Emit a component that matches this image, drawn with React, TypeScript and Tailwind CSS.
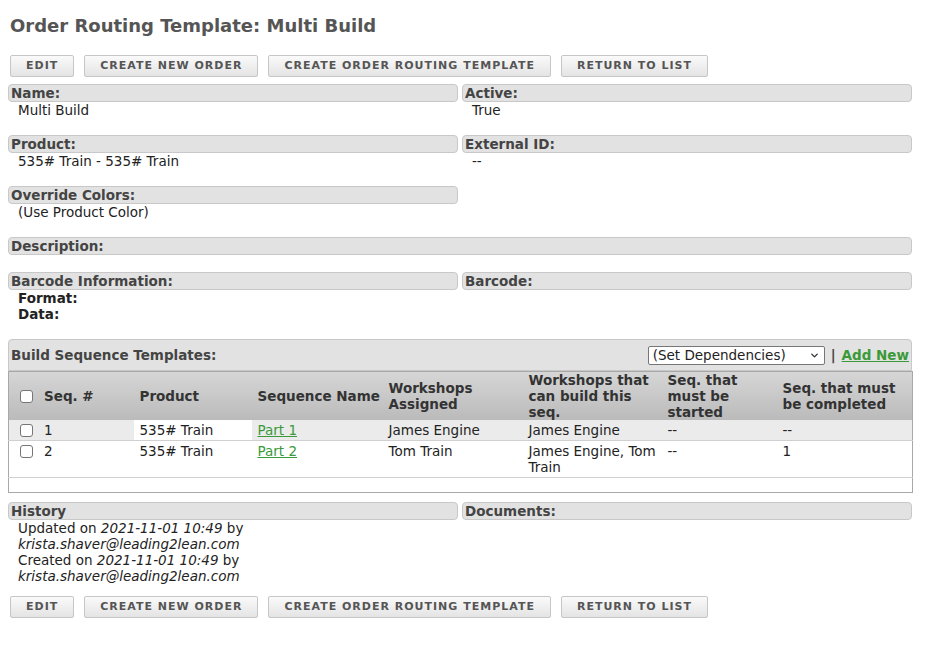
import { ChevronDown } from "lucide-react";

const buttons = ["Edit", "Create New Order", "Create Order Routing Template", "Return to List"];

function ButtonRow() {
  return (
    <div className="flex gap-[10px] pl-[2px]">
      {buttons.map((b) => (
        <button
          key={b}
          className="h-[22px] px-[15px] border border-[#c6c6c6] rounded-[2px] bg-gradient-to-b from-[#fafafa] to-[#e4e4e4] text-[11px] font-bold uppercase tracking-[1px] text-[#555]"
        >
          {b}
        </button>
      ))}
    </div>
  );
}

function Bar({ label, className = "" }: { label: string; className?: string }) {
  return (
    <div
      className={`h-[18px] leading-[16px] px-[2px] border border-[#c8c8c8] rounded-[4px] bg-[#e2e2e2] text-[13.5px] font-bold text-[#444] ${className}`}
    >
      {label}
    </div>
  );
}

function Field({ label, children }: { label: string; children?: React.ReactNode }) {
  return (
    <div className="mb-[17px]">
      <Bar label={label} />
      {children && <div className="pl-[10px] text-[13.5px] leading-[16px] text-[#222]">{children}</div>}
    </div>
  );
}

const rows = [
  { seq: "1", product: "535# Train", name: "Part 1", assigned: "James Engine", can: "James Engine", started: "--", completed: "--" },
  { seq: "2", product: "535# Train", name: "Part 2", assigned: "Tom Train", can: "James Engine, Tom Train", started: "--", completed: "1" },
];

function Check() {
  return <span className="inline-block w-[13px] h-[13px] border border-[#767676] rounded-[3px] bg-white align-middle" />;
}

function SequenceTable() {
  return (
    <div className="mb-[9px]">
      <div className="h-[32px] flex items-center justify-between px-[2px] border border-[#c8c8c8] rounded-t-[4px] bg-[#e2e2e2]">
        <span className="text-[13.5px] font-bold text-[#444]">Build Sequence Templates:</span>
        <div className="flex items-center text-[13.5px]">
          <div className="w-[177px] h-[19px] flex items-center justify-between pl-[4px] pr-[4px] border border-[#767676] rounded-[2px] bg-white text-[#222]">
            <span>(Set Dependencies)</span>
            <ChevronDown className="w-[11px] h-[11px] text-[#333]" strokeWidth={3} />
          </div>
          <span className="mx-[6px] font-bold text-[#444]">|</span>
          <a className="font-bold text-[#3a9a3a] underline">Add New</a>
        </div>
      </div>
      <table className="w-full table-fixed border-collapse border border-[#a8a8a8] text-[13.5px] text-[#222]">
        <colgroup>
          <col className="w-[125px]" />
          <col className="w-[118px]" />
          <col className="w-[131px]" />
          <col className="w-[140px]" />
          <col className="w-[139px]" />
          <col className="w-[115px]" />
          <col className="w-[136px]" />
        </colgroup>
        <thead>
          <tr className="h-[48px] bg-gradient-to-b from-[#d6d6d6] to-[#bababa] text-left font-bold text-[#333] leading-[16px]">
            <th className="pl-[11px] align-middle">
              <span className="flex items-center gap-[11px]">
                <Check />
                Seq. #
              </span>
            </th>
            <th className="pl-[6px]">Product</th>
            <th className="pl-[6px]">Sequence Name</th>
            <th className="pl-[6px]">Workshops Assigned</th>
            <th className="pl-[6px] pr-[4px]">Workshops that can build this seq.</th>
            <th className="pl-[6px] pr-[10px]">Seq. that must be started</th>
            <th className="pl-[6px]">Seq. that must be completed</th>
          </tr>
        </thead>
        <tbody className="leading-[16px]">
          {rows.map((r, i) => (
            <tr key={r.seq} className={`border-b border-[#d0d0d0] align-top ${i === 0 ? "bg-[#ebebeb]" : "bg-white"}`}>
              <td className="pl-[11px] py-[2px]">
                <span className="flex items-center gap-[11px]">
                  <Check />
                  {r.seq}
                </span>
              </td>
              <td className={`pl-[6px] py-[2px] ${i === 0 ? "bg-white" : ""}`}>{r.product}</td>
              <td className="pl-[6px] py-[2px]">
                <a className="text-[#3a9a3a] underline">{r.name}</a>
              </td>
              <td className="pl-[6px] py-[2px]">{r.assigned}</td>
              <td className="pl-[6px] pr-[4px] py-[2px]">{r.can}</td>
              <td className="pl-[6px] py-[2px]">{r.started}</td>
              <td className="pl-[6px] py-[2px]">{r.completed}</td>
            </tr>
          ))}
          <tr className="h-[15px]">
            <td colSpan={7}></td>
          </tr>
        </tbody>
      </table>
    </div>
  );
}

export default function App() {
  return (
    <div className="min-h-screen bg-white pl-[8px] w-[912px]" style={{ fontFamily: '"DejaVu Sans", Verdana, sans-serif' }}>
      <h1 className="pt-[14px] pl-[2px] text-[18px] leading-[24px] font-bold text-[#555] mb-[17px]">
        Order Routing Template: Multi Build
      </h1>
      <div className="mb-[7px]">
        <ButtonRow />
      </div>

      <div className="grid grid-cols-2 gap-x-[4px]">
        <Field label="Name:">Multi Build</Field>
        <Field label="Active:">True</Field>
        <Field label="Product:">535# Train - 535# Train</Field>
        <Field label="External ID:">--</Field>
        <Field label="Override Colors:">(Use Product Color)</Field>
        <div />
      </div>

      <Field label="Description:" />

      <div className="grid grid-cols-2 gap-x-[4px]">
        <Field label="Barcode Information:">
          <div className="font-bold">Format:</div>
          <div className="font-bold">Data:</div>
        </Field>
        <Field label="Barcode:" />
      </div>

      <SequenceTable />

      <div className="grid grid-cols-2 gap-x-[4px] mb-[12px]">
        <div>
          <Bar label="History" />
          <div className="pl-[10px] text-[13.5px] leading-[16px] text-[#222]">
            <div>
              Updated on <i>2021-11-01 10:49</i> by
            </div>
            <div>
              <i>krista.shaver@leading2lean.com</i>
            </div>
            <div>
              Created on <i>2021-11-01 10:49</i> by
            </div>
            <div>
              <i>krista.shaver@leading2lean.com</i>
            </div>
          </div>
        </div>
        <div>
          <Bar label="Documents:" />
        </div>
      </div>

      <ButtonRow />
    </div>
  );
}
